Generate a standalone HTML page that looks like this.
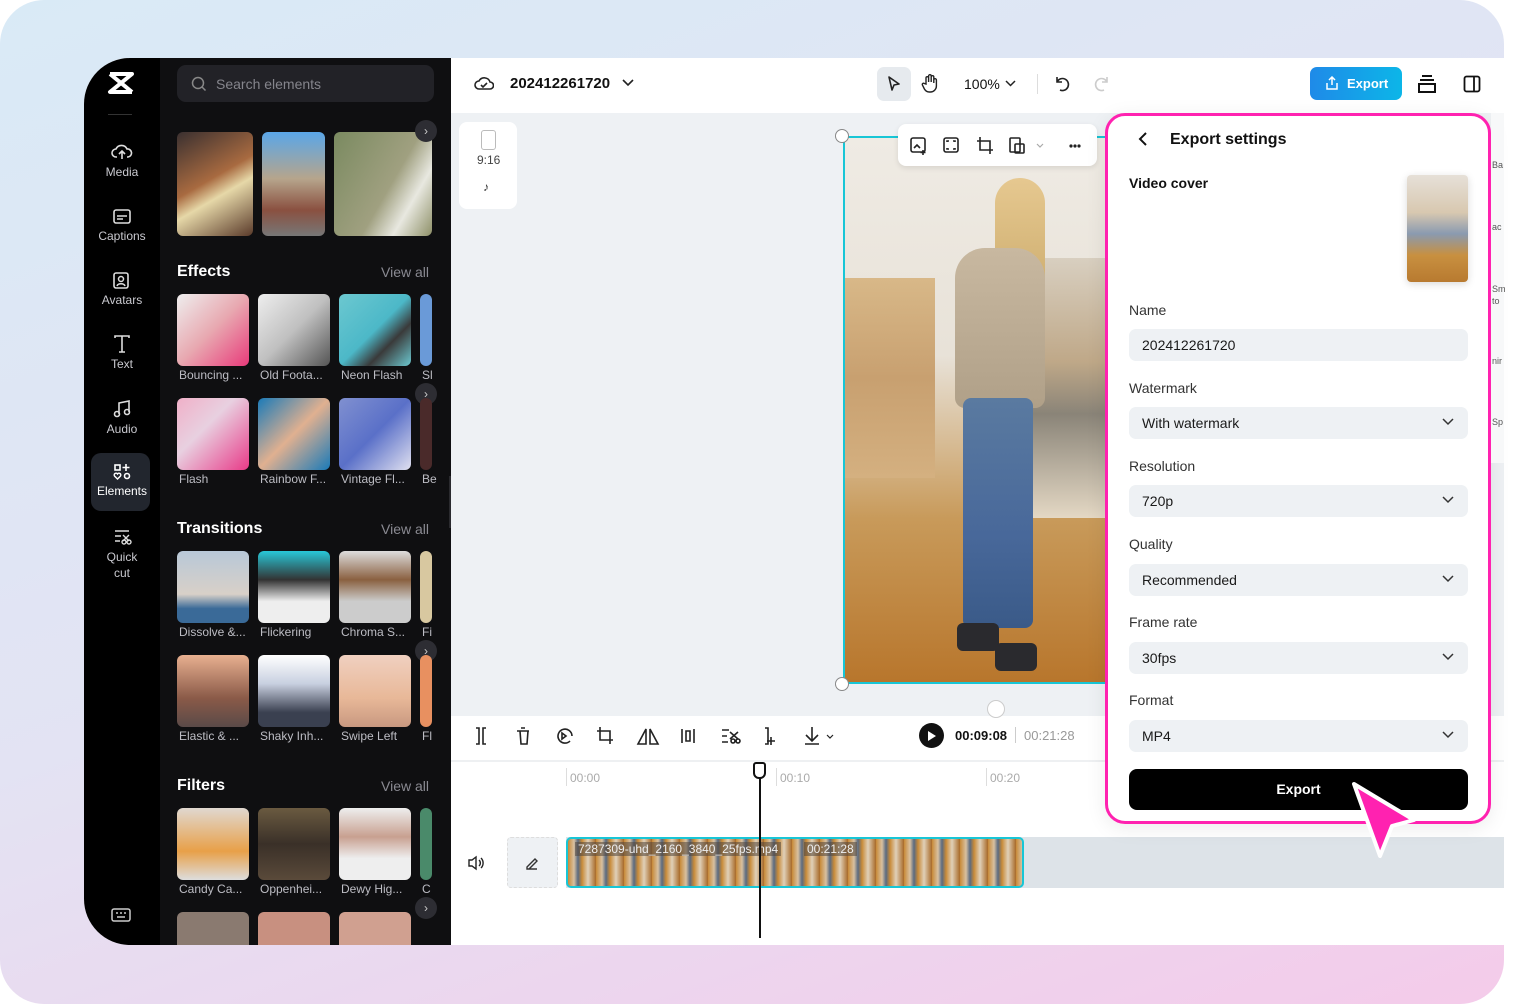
<!DOCTYPE html>
<html><head><meta charset="utf-8"><style>
*{box-sizing:border-box;margin:0;padding:0}
body{width:1522px;height:1004px;background:#fff;font-family:"Liberation Sans",sans-serif;position:relative;overflow:hidden}
.abs{position:absolute}
.bg{left:0;top:0;width:1504px;height:1004px;border-radius:44px;background:linear-gradient(160deg,#d9eaf6 0%,#e3e3f3 50%,#f4cbea 100%)}
.app{left:84px;top:58px;width:1420px;height:887px;background:#fff;border-radius:46px 0 0 46px;overflow:hidden}
.side{left:0;top:0;width:76px;height:887px;background:#000}
.panel{left:76px;top:0;width:291px;height:887px;background:#0f0f11}
.nav{position:absolute;left:0;width:76px;text-align:center;color:#c9c9cf;font-size:12px}
.nav svg{display:block;margin:0 auto 3px}
.th{position:absolute;width:72px;height:72px;border-radius:6px}
.lbl{position:absolute;color:#bdbdc4;font-size:12px;white-space:nowrap}
.h{position:absolute;color:#fff;font-size:16px;font-weight:bold}
.va{position:absolute;right:19px;color:#8a8a92;font-size:14px}
.lab{position:absolute;left:1129px;font-size:14px;color:#333}
.fld{position:absolute;left:1129px;width:339px;height:32px;background:#eef1f4;border-radius:7px;font-size:14px;color:#1a1a1a;padding:8px 13px}
.fld svg{position:absolute;right:14px;top:11px}
.arr{position:absolute;width:22px;height:22px;border-radius:50%;background:#2d2d33;color:#ccc;font-size:12px;text-align:center;line-height:22px}
</style></head><body>
<div class="abs bg"></div>
<div class="abs app">
 <div class="abs side"></div>
 <div class="abs panel"></div>
</div>
<svg class="abs" style="left:107px;top:71px" width="28" height="24" viewBox="0 0 28 24"><path d="M3 3h22L3 21h22M3 3l22 18" stroke="#fff" stroke-width="4" fill="none" stroke-linejoin="round"/></svg>
<div class="abs" style="left:108px;top:114px;width:24px;height:1px;background:#333"></div>
<div class="nav" style="left:84px;top:142px"><svg width="22" height="20" viewBox="0 0 22 20"><path d="M6 15H5a4 4 0 010-8 6 6 0 0111 0 4 4 0 011 8h-1M11 17V9M8 12l3-3 3 3" stroke="#ddd" stroke-width="1.6" fill="none"/></svg>Media</div>
<div class="nav" style="left:84px;top:208px"><svg width="20" height="18" viewBox="0 0 20 18"><rect x="2" y="2" width="16" height="13" rx="2" stroke="#ddd" stroke-width="1.6" fill="none"/><path d="M5 8h10M5 11h6" stroke="#ddd" stroke-width="1.6"/></svg>Captions</div>
<div class="nav" style="left:84px;top:272px"><svg width="20" height="18" viewBox="0 0 20 18"><rect x="2" y="1" width="14" height="15" rx="2" stroke="#ddd" stroke-width="1.6" fill="none"/><circle cx="9" cy="7" r="2.5" stroke="#ddd" stroke-width="1.5" fill="none"/><path d="M5 14c1-3 7-3 8 0" stroke="#ddd" stroke-width="1.5" fill="none"/></svg>Avatars</div>
<div class="nav" style="left:84px;top:334px"><svg width="20" height="20" viewBox="0 0 20 20"><path d="M3 4V2h14v2M10 2v16M7 18h6" stroke="#ddd" stroke-width="1.6" fill="none"/></svg>Text</div>
<div class="nav" style="left:84px;top:399px"><svg width="20" height="20" viewBox="0 0 20 20"><path d="M7 15V4l10-2v11" stroke="#ddd" stroke-width="1.6" fill="none"/><circle cx="5" cy="15" r="2.5" stroke="#ddd" stroke-width="1.6" fill="none"/><circle cx="15" cy="13" r="2.5" stroke="#ddd" stroke-width="1.6" fill="none"/></svg>Audio</div>
<div class="abs" style="left:91px;top:453px;width:59px;height:58px;border-radius:10px;background:#22262e"></div>
<div class="nav" style="left:84px;top:463px;color:#fff"><svg width="20" height="18" viewBox="0 0 20 18"><rect x="3" y="2" width="5" height="5" stroke="#fff" stroke-width="1.6" fill="none"/><path d="M14 1v7M10.5 4.5h7" stroke="#fff" stroke-width="1.6"/><circle cx="15" cy="13" r="2.5" stroke="#fff" stroke-width="1.6" fill="none"/><path d="M5.5 16l-3-3a1.6 1.6 0 013-2 1.6 1.6 0 013 2z" stroke="#fff" stroke-width="1.4" fill="none"/></svg>Elements</div>
<div class="nav" style="left:84px;top:528px;line-height:16px"><svg width="20" height="18" viewBox="0 0 20 18"><path d="M3 3h14M3 8h6M3 13h5" stroke="#ddd" stroke-width="1.6"/><circle cx="12" cy="14" r="2" stroke="#ddd" stroke-width="1.4" fill="none"/><circle cx="17" cy="14" r="2" stroke="#ddd" stroke-width="1.4" fill="none"/><path d="M11 7l6 6M17 7l-6 6" stroke="#ddd" stroke-width="1.4"/></svg>Quick<br>cut</div>
<svg class="abs" style="left:111px;top:907px" width="20" height="16" viewBox="0 0 20 16"><rect x="1" y="2" width="18" height="12" rx="2" stroke="#ccc" stroke-width="1.5" fill="none"/><path d="M5 6h2M9 6h2M13 6h2M6 10h8" stroke="#ccc" stroke-width="1.5"/></svg>
<div class="abs" style="left:177px;top:65px;width:257px;height:37px;border-radius:9px;background:#222227"></div>
<svg class="abs" style="left:191px;top:76px" width="16" height="16" viewBox="0 0 16 16"><circle cx="7" cy="7" r="5.5" stroke="#888" stroke-width="1.5" fill="none"/><path d="M11 11l3.5 3.5" stroke="#888" stroke-width="1.5"/></svg>
<div class="abs" style="left:216px;top:76px;color:#85858c;font-size:14px">Search elements</div>
<div class="th" style="left:177px;top:132px;width:76px;height:104px;background:linear-gradient(150deg,#3a3030,#a86a40 45%,#e6d8a8 60%,#5a3a2a)"></div>
<div class="th" style="left:262px;top:132px;width:63px;height:104px;background:linear-gradient(180deg,#5aa6e8,#b6a58c 45%,#8a5040 75%,#777)"></div>
<div class="th" style="left:334px;top:132px;width:98px;height:104px;background:linear-gradient(120deg,#7a8a60,#a0a080 55%,#e8e8e0 75%,#8e9068)"></div>
<div class="arr" style="left:415px;top:120px">›</div>
<div class="h" style="left:177px;top:263px">Effects</div><div class="va" style="left:381px;top:264px">View all</div>
<div class="th" style="left:177px;top:294px;background:linear-gradient(135deg,#eee,#e8a8b0 50%,#e83a7a)"></div>
<div class="th" style="left:258px;top:294px;background:linear-gradient(135deg,#eee,#c0c0c0 50%,#555)"></div>
<div class="th" style="left:339px;top:294px;background:linear-gradient(135deg,#6cc8d0,#4cb8c8 50%,#3a3a3a 70%,#6cc8d0)"></div>
<div class="th" style="left:420px;top:294px;width:12px;background:#6a9ad8"></div>
<div class="lbl" style="left:179px;top:368px">Bouncing ...</div><div class="lbl" style="left:260px;top:368px">Old Foota...</div><div class="lbl" style="left:341px;top:368px">Neon Flash</div><div class="lbl" style="left:422px;top:368px">Sl</div>
<div class="arr" style="left:415px;top:383px">›</div>
<div class="th" style="left:177px;top:398px;background:linear-gradient(135deg,#f0b0c8,#e8d0e0 40%,#e83a88)"></div>
<div class="th" style="left:258px;top:398px;background:linear-gradient(135deg,#1a7ab8,#e0b090 50%,#1a7ab8)"></div>
<div class="th" style="left:339px;top:398px;background:linear-gradient(135deg,#8090d0,#5a70c8 50%,#e0e0f0)"></div>
<div class="th" style="left:420px;top:398px;width:12px;background:#4a2a2a"></div>
<div class="lbl" style="left:179px;top:472px">Flash</div><div class="lbl" style="left:260px;top:472px">Rainbow F...</div><div class="lbl" style="left:341px;top:472px">Vintage Fl...</div><div class="lbl" style="left:422px;top:472px">Be</div>
<div class="h" style="left:177px;top:520px">Transitions</div><div class="va" style="left:381px;top:521px">View all</div>
<div class="th" style="left:177px;top:551px;background:linear-gradient(180deg,#b8c8d8,#d8d0c8 60%,#3a6a98 80%)"></div>
<div class="th" style="left:258px;top:551px;background:linear-gradient(180deg,#28c8d8,#333 40%,#eee 70%)"></div>
<div class="th" style="left:339px;top:551px;background:linear-gradient(180deg,#ddd,#8a6040 40%,#ccc 70%)"></div>
<div class="th" style="left:420px;top:551px;width:12px;background:#d8c8a0"></div>
<div class="lbl" style="left:179px;top:625px">Dissolve &...</div><div class="lbl" style="left:260px;top:625px">Flickering</div><div class="lbl" style="left:341px;top:625px">Chroma S...</div><div class="lbl" style="left:422px;top:625px">Fi</div>
<div class="arr" style="left:415px;top:640px">›</div>
<div class="th" style="left:177px;top:655px;background:linear-gradient(180deg,#e8b090,#8a5a48 60%,#5a4a48)"></div>
<div class="th" style="left:258px;top:655px;background:linear-gradient(180deg,#fff,#c8d0e0 40%,#3a4050 80%)"></div>
<div class="th" style="left:339px;top:655px;background:linear-gradient(180deg,#f0d0c0,#e8b898 60%,#c89880)"></div>
<div class="th" style="left:420px;top:655px;width:12px;background:#e89060"></div>
<div class="lbl" style="left:179px;top:729px">Elastic & ...</div><div class="lbl" style="left:260px;top:729px">Shaky Inh...</div><div class="lbl" style="left:341px;top:729px">Swipe Left</div><div class="lbl" style="left:422px;top:729px">Fl</div>
<div class="h" style="left:177px;top:777px">Filters</div><div class="va" style="left:381px;top:778px">View all</div>
<div class="th" style="left:177px;top:808px;background:linear-gradient(180deg,#e0d8d0,#e8a048 60%,#ddd)"></div>
<div class="th" style="left:258px;top:808px;background:linear-gradient(180deg,#6a5a40,#3a3028 50%,#5a4a3a)"></div>
<div class="th" style="left:339px;top:808px;background:linear-gradient(180deg,#eee,#c8a090 40%,#eee 70%)"></div>
<div class="th" style="left:420px;top:808px;width:12px;background:#4a8a6a"></div>
<div class="lbl" style="left:179px;top:882px">Candy Ca...</div><div class="lbl" style="left:260px;top:882px">Oppenhei...</div><div class="lbl" style="left:341px;top:882px">Dewy Hig...</div><div class="lbl" style="left:422px;top:882px">C</div>
<div class="arr" style="left:415px;top:897px">›</div>
<div class="th" style="left:177px;top:912px;height:33px;border-radius:6px 6px 0 0;background:#8a7a70"></div>
<div class="th" style="left:258px;top:912px;height:33px;border-radius:6px 6px 0 0;background:#c89080"></div>
<div class="th" style="left:339px;top:912px;height:33px;border-radius:6px 6px 0 0;background:#d0a090"></div>
<div class="abs" style="left:449px;top:476px;width:8px;height:52px;border-radius:0 6px 6px 0;background:#2a2a2e"></div>
<svg class="abs" style="left:474px;top:74px" width="20" height="18" viewBox="0 0 20 18"><path d="M5 15a4 4 0 010-8 6 6 0 0111 1 3.5 3.5 0 010 7z" stroke="#222" stroke-width="1.6" fill="none"/><path d="M7 11l2 2 4-4" stroke="#222" stroke-width="1.6" fill="none"/></svg>
<div class="abs" style="left:510px;top:75px;font-size:15px;font-weight:bold;color:#111">202412261720</div>
<svg class="abs" style="left:622px;top:79px" width="12" height="8"><path d="M1 1l5 5 5-5" stroke="#222" stroke-width="1.6" fill="none"/></svg>
<div class="abs" style="left:877px;top:67px;width:34px;height:34px;border-radius:7px;background:#e6eaee"></div>
<svg class="abs" style="left:886px;top:75px" width="16" height="18" viewBox="0 0 16 18"><path d="M3 2l10 7-5 1-2 5z" stroke="#222" stroke-width="1.6" fill="none" stroke-linejoin="round"/></svg>
<svg class="abs" style="left:921px;top:73px" width="18" height="20" viewBox="0 0 18 20"><path d="M5 11V5a1.3 1.3 0 012.6 0v4V3a1.3 1.3 0 012.6 0v6V4a1.3 1.3 0 012.6 0v6-3a1.3 1.3 0 012.6 0v6a6 6 0 01-6 6h-1a6 6 0 01-5-3l-2-4a1.3 1.3 0 012-1.5z" stroke="#222" stroke-width="1.4" fill="none"/></svg>
<div class="abs" style="left:964px;top:76px;font-size:14px;color:#111">100%</div>
<svg class="abs" style="left:1005px;top:80px" width="11" height="7"><path d="M1 1l4.5 4.5L10 1" stroke="#222" stroke-width="1.5" fill="none"/></svg>
<div class="abs" style="left:1037px;top:74px;width:1px;height:20px;background:#ddd"></div>
<svg class="abs" style="left:1053px;top:75px" width="18" height="18" viewBox="0 0 18 18"><path d="M4 2v5h5M4 7a6 6 0 113 8" stroke="#222" stroke-width="1.6" fill="none"/></svg>
<svg class="abs" style="left:1093px;top:75px" width="18" height="18" viewBox="0 0 18 18"><path d="M14 2v5H9M14 7a6 6 0 10-3 8" stroke="#ccc" stroke-width="1.6" fill="none"/></svg>
<div class="abs" style="left:1310px;top:67px;width:92px;height:33px;border-radius:7px;background:linear-gradient(90deg,#1f8ae8,#0cb6e8);color:#fff;font-size:13px;font-weight:bold;padding:9px 0 0 37px">Export</div>
<svg class="abs" style="left:1325px;top:76px" width="14" height="14" viewBox="0 0 14 14"><path d="M7 9V1M4 4l3-3 3 3M2 7v6h10V7" stroke="#fff" stroke-width="1.5" fill="none"/></svg>
<svg class="abs" style="left:1417px;top:74px" width="20" height="20" viewBox="0 0 20 20"><path d="M5 2h10M3 6h14M2 10h16v8H2z" stroke="#111" stroke-width="2" fill="none"/></svg>
<svg class="abs" style="left:1463px;top:75px" width="18" height="18" viewBox="0 0 18 18"><rect x="1.5" y="1.5" width="15" height="15" rx="2" stroke="#111" stroke-width="1.8" fill="none"/><path d="M11 2v14" stroke="#111" stroke-width="1.8"/></svg>
<div class="abs" style="left:451px;top:113px;width:1053px;height:603px;background:#eef1f4"></div>
<div class="abs" style="left:459px;top:122px;width:58px;height:87px;border-radius:8px;background:#fff"></div>
<div class="abs" style="left:481px;top:130px;width:15px;height:20px;border:1.5px solid #bbb;border-radius:3px"></div>
<div class="abs" style="left:477px;top:153px;font-size:12px;color:#444">9:16</div>
<div class="abs" style="left:483px;top:180px;font-size:12px;color:#333">♪</div>
<!-- video -->
<div class="abs" style="left:843px;top:136px;width:270px;height:548px;border:2px solid #18c6d6;background:linear-gradient(180deg,#efebe4 0%,#e8e2d8 40%,#c89a5a 70%,#b8762c 100%);overflow:hidden">
 <div class="abs" style="left:0;top:140px;width:90px;height:200px;background:linear-gradient(180deg,#d8b888,#c8a070 50%,#d4b080)"></div>
 <div class="abs" style="left:170px;top:120px;width:100px;height:260px;background:linear-gradient(180deg,#d8cfc0,#bfa888 40%,#8a8478 60%,#e4d8c4)"></div>
 <div class="abs" style="left:150px;top:40px;width:50px;height:140px;border-radius:25px 25px 10px 10px;background:linear-gradient(180deg,#e6c890,#c8a868)"></div>
 <div class="abs" style="left:110px;top:110px;width:90px;height:160px;border-radius:30px 30px 10px 10px;background:linear-gradient(180deg,#c8b8a0,#b0a088)"></div>
 <div class="abs" style="left:118px;top:260px;width:70px;height:230px;border-radius:8px;background:linear-gradient(180deg,#5a7aa0,#48689a 60%,#3a5a88)"></div>
 <div class="abs" style="left:112px;top:485px;width:42px;height:28px;border-radius:6px;background:#2a2a2e"></div>
 <div class="abs" style="left:150px;top:505px;width:42px;height:28px;border-radius:6px;background:#2a2a2e"></div>
</div>
<div class="abs" style="left:835px;top:129px;width:14px;height:14px;border-radius:50%;background:#fff;border:1.5px solid #888"></div>
<div class="abs" style="left:835px;top:677px;width:14px;height:14px;border-radius:50%;background:#fff;border:1.5px solid #888"></div>
<div class="abs" style="left:898px;top:124px;width:199px;height:42px;border-radius:8px;background:#fff;box-shadow:0 2px 6px rgba(0,0,0,.1)"></div>
<svg class="abs" style="left:909px;top:136px" width="180" height="20" viewBox="0 0 180 20"><g stroke="#222" stroke-width="1.6" fill="none"><rect x="2" y="2" width="14" height="14" rx="2"/><path d="M5 12l3-3 3 3M14 14v5M11.5 16.5h5"/><rect x="35" y="2" width="14" height="14" rx="2"/><path d="M38 6v-1h2M46 6v-1h-2M38 12v1h2M46 12v1h-2"/><path d="M71 1v13h13M68 5h13v13"/><rect x="101" y="2" width="10" height="14" rx="1"/><rect x="106" y="8" width="9" height="9" rx="1"/></g><path d="M128 8l3 3 3-3" stroke="#aaa" stroke-width="1.2" fill="none"/><circle cx="162" cy="10" r="1.6" fill="#222"/><circle cx="166" cy="10" r="1.6" fill="#222"/><circle cx="170" cy="10" r="1.6" fill="#222"/></svg>
<div class="abs" style="left:987px;top:700px;width:18px;height:18px;border-radius:50%;background:#fff;border:1px solid #ccc"></div>
<svg class="abs" style="left:472px;top:725px" width="370" height="22" viewBox="0 0 370 22"><g stroke="#222" stroke-width="1.6" fill="none"><path d="M4 3h3v16H4M14 3h-3v16h3"/><path d="M45 6h12M48 6l1 13h6l1-13M49 3h4"/><path d="M100 11a7 7 0 10-2 5M90 8l4 3-4 3z"/><path d="M128 2v13h13M125 6h13v13"/><path d="M174 4v15h-8zM178 4v15h8z"/><path d="M210 4v14M222 4v14M214 6h4v10h-4z"/><path d="M250 5h7M250 11h5M250 17h6"/><circle cx="261" cy="16" r="2"/><circle cx="266" cy="16" r="2"/><path d="M258 7l8 7M266 7l-8 7"/><path d="M293 3h3v16h-3M299 12v8M295 16h8"/><path d="M340 2v14M334 10l6 6 6-6M333 19h14"/><path d="M355 10l3 3 3-3" stroke-width="1.2"/></g></svg>
<div class="abs" style="left:919px;top:723px;width:25px;height:25px;border-radius:50%;background:#111"></div>
<div class="abs" style="left:928px;top:731px;width:0;height:0;border-left:8px solid #fff;border-top:5px solid transparent;border-bottom:5px solid transparent"></div>
<div class="abs" style="left:955px;top:728px;font-size:13px;font-weight:bold;color:#111">00:09:08</div>
<div class="abs" style="left:1015px;top:727px;width:1px;height:16px;background:#ccc"></div>
<div class="abs" style="left:1024px;top:728px;font-size:13px;color:#999">00:21:28</div>
<div class="abs" style="left:451px;top:760px;width:1053px;height:2px;background:#eef0f2"></div>
<div class="abs" style="left:566px;top:768px;width:1px;height:18px;background:#ddd"></div>
<div class="abs" style="left:776px;top:768px;width:1px;height:18px;background:#ddd"></div>
<div class="abs" style="left:986px;top:768px;width:1px;height:18px;background:#ddd"></div>
<div class="abs" style="left:570px;top:771px;font-size:12px;color:#aaa">00:00</div>
<div class="abs" style="left:780px;top:771px;font-size:12px;color:#aaa">00:10</div>
<div class="abs" style="left:990px;top:771px;font-size:12px;color:#aaa">00:20</div>
<div class="abs" style="left:566px;top:837px;width:938px;height:51px;background:#dde3e8"></div>
<svg class="abs" style="left:467px;top:855px" width="18" height="16" viewBox="0 0 18 16"><path d="M2 5h3l4-3v12l-4-3H2zM12 5a4 4 0 010 6M14 3a7 7 0 010 10" stroke="#222" stroke-width="1.4" fill="none"/></svg>
<div class="abs" style="left:507px;top:837px;width:51px;height:51px;border-radius:4px;background:#eef1f4;border:1px dashed #ddd"></div>
<svg class="abs" style="left:524px;top:855px" width="16" height="16" viewBox="0 0 16 16"><path d="M3 12l8-8 2 2-8 8H3zM3 14h10" stroke="#333" stroke-width="1.4" fill="none"/></svg>
<div class="abs" style="left:566px;top:837px;width:458px;height:51px;border:2px solid #18c6d6;border-radius:5px;background:repeating-linear-gradient(90deg,#c88a38 0,#d8c0a0 6px,#5a6a80 10px,#c88a38 14px,#e0d0b8 20px,#a86a28 28px)"></div>
<div class="abs" style="left:575px;top:842px;padding:0 3px;background:rgba(80,70,60,.55);color:#eee;font-size:12px">7287309-uhd_2160_3840_25fps.mp4</div>
<div class="abs" style="left:804px;top:842px;padding:0 3px;background:rgba(80,70,60,.55);color:#eee;font-size:12px">00:21:28</div>
<div class="abs" style="left:759px;top:775px;width:2px;height:163px;background:#111"></div>
<div class="abs" style="left:753px;top:762px;width:13px;height:17px;border:2px solid #111;border-radius:3px 3px 6px 6px;background:#fff"></div>
<div class="abs" style="left:1105px;top:113px;width:386px;height:711px;border:3px solid #ff22b0;border-radius:20px;background:#fff;box-shadow:0 4px 20px rgba(0,0,0,.08)"></div>
<svg class="abs" style="left:1137px;top:131px" width="12" height="16"><path d="M9 2L3 8l6 6" stroke="#111" stroke-width="2" fill="none"/></svg>
<div class="abs" style="left:1170px;top:131px;font-size:16px;font-weight:bold;color:#111">Export settings</div>
<div class="abs" style="left:1129px;top:175px;font-size:14px;font-weight:bold;color:#111">Video cover</div>
<div class="abs" style="left:1407px;top:175px;width:61px;height:107px;border-radius:4px;background:linear-gradient(180deg,#e6e0d8 0%,#d8c8b0 35%,#8a9ab0 55%,#c89040 75%,#b87a30);box-shadow:0 2px 8px rgba(0,0,0,.15)"></div>
<div class="lab" style="top:302px">Name</div>
<div class="fld" style="top:329px">202412261720</div>
<div class="lab" style="top:380px">Watermark</div>
<div class="fld" style="top:407px">With watermark<svg width="12" height="8"><path d="M1 1l5 5 5-5" stroke="#333" stroke-width="1.5" fill="none"/></svg></div>
<div class="lab" style="top:458px">Resolution</div>
<div class="fld" style="top:485px">720p<svg width="12" height="8"><path d="M1 1l5 5 5-5" stroke="#333" stroke-width="1.5" fill="none"/></svg></div>
<div class="lab" style="top:536px">Quality</div>
<div class="fld" style="top:564px">Recommended<svg width="12" height="8"><path d="M1 1l5 5 5-5" stroke="#333" stroke-width="1.5" fill="none"/></svg></div>
<div class="lab" style="top:614px">Frame rate</div>
<div class="fld" style="top:642px">30fps<svg width="12" height="8"><path d="M1 1l5 5 5-5" stroke="#333" stroke-width="1.5" fill="none"/></svg></div>
<div class="lab" style="top:692px">Format</div>
<div class="fld" style="top:720px">MP4<svg width="12" height="8"><path d="M1 1l5 5 5-5" stroke="#333" stroke-width="1.5" fill="none"/></svg></div>
<div class="abs" style="left:1129px;top:769px;width:339px;height:41px;border-radius:8px;background:#000;color:#fff;font-size:14px;font-weight:bold;text-align:center;line-height:41px">Export</div>
<svg class="abs" style="left:1346px;top:778px" width="76" height="84" viewBox="0 0 76 84"><path d="M8 6l60 36-22 6-12 30z" fill="#ff22b0" stroke="#fff" stroke-width="4" stroke-linejoin="round"/></svg>
<div class="abs" style="left:1491px;top:113px;width:13px;height:350px;background:#f7f8f9"></div>
<div class="abs" style="left:1492px;top:160px;font-size:9px;color:#555">Ba</div>
<div class="abs" style="left:1492px;top:222px;font-size:9px;color:#555">ac</div>
<div class="abs" style="left:1492px;top:283px;font-size:9px;color:#555;line-height:12px">Sm<br>to</div>
<div class="abs" style="left:1492px;top:356px;font-size:9px;color:#555">nir</div>
<div class="abs" style="left:1492px;top:417px;font-size:9px;color:#555">Sp</div>
</body></html>
